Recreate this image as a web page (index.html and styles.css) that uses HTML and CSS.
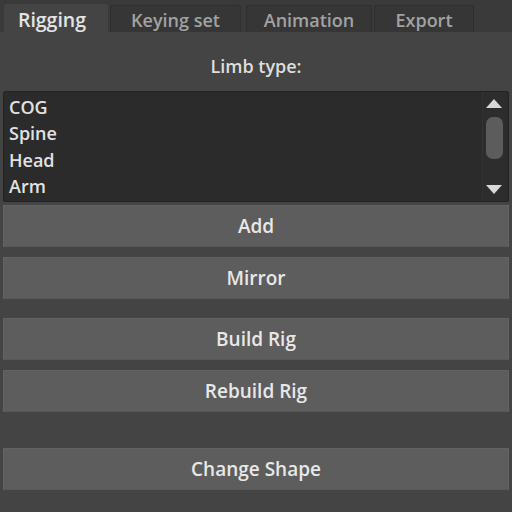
FILE: index.html
```html
<!DOCTYPE html>
<html>
<head>
<meta charset="utf-8">
<link rel="stylesheet" href="styles.css">
</head>
<body>
<div class="tabbar">
  <div class="tab active t1">Rigging</div>
  <div class="tab t2">Keying set</div>
  <div class="tab t3">Animation</div>
  <div class="tab t4">Export</div>
</div>
<div class="panel">
  <div class="label">Limb type:</div>
  <div class="list">
    <div class="items">
      <div class="item">COG</div>
      <div class="item">Spine</div>
      <div class="item">Head</div>
      <div class="item">Arm</div>
    </div>
    <div class="scroll">
      <svg class="arrow" width="18" height="11" viewBox="0 0 18 11"><polygon points="9,1 17,10 1,10" fill="#d8d8d8"/></svg>
      <div class="track"><div class="thumb"></div></div>
      <svg class="arrow" width="18" height="11" viewBox="0 0 18 11"><polygon points="1,1 17,1 9,10" fill="#d8d8d8"/></svg>
    </div>
  </div>
  <div class="btn first">Add</div>
  <div class="btn gap10">Mirror</div>
  <div class="btn gap19">Build Rig</div>
  <div class="btn gap10">Rebuild Rig</div>
  <div class="btn gap36">Change Shape</div>
</div>
</body>
</html>
```
FILE: styles.css
```css
html, body {
  margin: 0;
  padding: 0;
  background: #444444;
  font-family: "Open Sans", "DejaVu Sans", sans-serif;
  font-weight: 600;
}
.tabbar {
  height: 32px;
  background: #3a3a3a;
  display: flex;
  align-items: flex-end;
  padding-left: 4px;
  box-sizing: border-box;
}
.tab {
  height: 27px;
  box-sizing: border-box;
  background: #363636;
  border: 1px solid #2f2f2f;
  border-bottom: none;
  border-radius: 3px 3px 0 0;
  color: #a2a2a2;
  font-size: 18px;
  display: flex;
  align-items: center;
  justify-content: center;
  margin-right: 3px;
  padding-top: 2px;
}
.tab.active {
  height: 28px;
  background: #444444;
  border-color: #444444;
  color: #e4e4e4;
  font-size: 19.5px;
  padding-right: 8px;
}
.t1 { width: 104px; margin-right: 2px; }
.t2 { width: 131px; margin-right: 5px; }
.t3 { width: 126px; margin-right: 2px; }
.t4 { width: 100px; }
.panel {
  padding: 0 3px;
}
.label {
  height: 59px;
  display: flex;
  align-items: center;
  justify-content: center;
  color: #dedede;
  font-size: 18px;
  padding-top: 8px;
  box-sizing: border-box;
}
.list {
  height: 111px;
  box-sizing: border-box;
  background: #2b2b2b;
  border: 1px solid #232323;
  border-radius: 2px;
  display: flex;
}
.items {
  flex: 1;
  padding-top: 2px;
  padding-left: 5px;
}
.item {
  height: 26.3px;
  line-height: 26px;
  color: #e2e2e2;
  font-size: 18px;
}
.scroll {
  width: 22px;
  margin-right: 3px;
  padding-bottom: 6px;
  display: flex;
  flex-direction: column;
  align-items: center;
  background: #2d2d2d;
  border-left: 1px solid #333;
}
.arrow {
  display: block;
  margin-top: 6px;
}
.track {
  flex: 1;
  width: 100%;
  display: flex;
  justify-content: center;
  padding-top: 8px;
}
.thumb {
  width: 17px;
  height: 42px;
  border-radius: 7px;
  background: #5c5c5c;
}
.btn {
  height: 42px;
  box-sizing: border-box;
  background: #5d5d5d;
  border: 1px solid #626262;
  border-bottom-color: #585858;
  display: flex;
  align-items: center;
  justify-content: center;
  color: #e8e8e8;
  font-size: 19px;
}
.first { margin-top: 3px; }
.gap10 { margin-top: 10px; }
.gap19 { margin-top: 19px; }
.gap36 { margin-top: 36px; }
```
